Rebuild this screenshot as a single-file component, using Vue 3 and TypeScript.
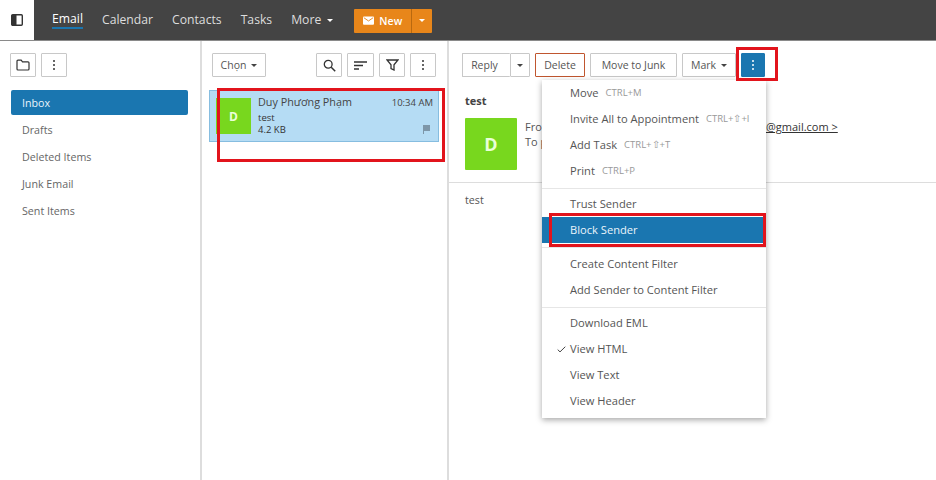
<script setup lang="ts">
const navItems = ['Calendar', 'Contacts', 'Tasks']
const folders = ['Drafts', 'Deleted Items', 'Junk Email', 'Sent Items']
</script>

<template>
  <div class="app">
    <header class="topbar">
      <div class="brand">
        <svg width="12" height="12" viewBox="0 0 12 12"><rect x=".7" y=".7" width="10.6" height="10.6" rx="1" fill="none" stroke="#333" stroke-width="1.4"/><rect x="1" y="1" width="4.5" height="10" fill="#333"/></svg>
      </div>
      <nav class="nav">
        <span class="nav-item active">Email</span>
        <span v-for="n in navItems" :key="n" class="nav-item">{{ n }}</span>
        <span class="nav-item">More <i class="caret light"></i></span>
      </nav>
      <div class="new-btn">
        <span class="new-main">
          <svg width="11" height="9" viewBox="0 0 12 9"><rect width="12" height="9" rx="1" fill="#fff"/><path d="M1 1.5 6 5l5-3.5" fill="none" stroke="#e8861a" stroke-width="1"/></svg>
          New
        </span>
        <span class="new-drop"><i class="caret light"></i></span>
      </div>
    </header>

    <main class="body">
      <aside class="sidebar">
        <div class="tools">
          <button class="btn icon">
            <svg width="14" height="12" viewBox="0 0 14 12"><path d="M1 2.2c0-.6.4-1 1-1h3.2l1.3 1.6H12c.6 0 1 .4 1 1V10c0 .6-.4 1-1 1H2c-.6 0-1-.4-1-1z" fill="none" stroke="#333" stroke-width="1.2"/></svg>
          </button>
          <button class="btn icon"><span class="dots"><i></i><i></i><i></i></span></button>
        </div>
        <div class="folder selected">Inbox</div>
        <div v-for="f in folders" :key="f" class="folder">{{ f }}</div>
      </aside>

      <section class="list">
        <div class="list-tools">
          <button class="btn select">Chọn <i class="caret"></i></button>
          <div class="list-actions">
            <button class="btn icon">
              <svg width="13" height="13" viewBox="0 0 13 13"><circle cx="5.2" cy="5.2" r="3.9" fill="none" stroke="#333" stroke-width="1.3"/><path d="m8.2 8.2 4 4" stroke="#333" stroke-width="1.5"/></svg>
            </button>
            <button class="btn icon wide">
              <svg width="13" height="9" viewBox="0 0 13 9"><path d="M0 1h13M0 4.5h9M0 8h5" stroke="#333" stroke-width="1.3"/></svg>
            </button>
            <button class="btn icon">
              <svg width="13" height="12" viewBox="0 0 13 12"><path d="M1 1h11L8 5.8V11L5 9.5V5.8z" fill="none" stroke="#333" stroke-width="1.3"/></svg>
            </button>
            <button class="btn icon"><span class="dots"><i></i><i></i><i></i></span></button>
          </div>
        </div>
        <div class="message">
          <div class="avatar small">D</div>
          <div class="msg-text">
            <div class="msg-row"><span class="sender">Duy Phương Phạm</span><span class="time">10:34 AM</span></div>
            <div class="subject">test</div>
            <div class="msg-row"><span class="size">4.2 KB</span>
              <svg width="9" height="9" viewBox="0 0 9 9" class="flag"><path d="M1 0h7v6H2v3H1z" fill="#7d96a8"/></svg>
            </div>
          </div>
        </div>
      </section>

      <section class="reader">
        <div class="read-tools">
          <div class="split">
            <button class="btn reply">Reply</button>
            <button class="btn reply-drop"><i class="caret"></i></button>
          </div>
          <button class="btn delete">Delete</button>
          <button class="btn junk">Move to Junk</button>
          <button class="btn mark">Mark <i class="caret"></i></button>
          <button class="btn icon more"><span class="dots white"><i></i><i></i><i></i></span></button>
        </div>
        <div class="read-head">
          <div class="read-subject">test</div>
          <div class="read-meta">
            <div class="avatar large">D</div>
            <div class="addr">
              <div class="addr-from"><span>From</span><span class="email">@gmail.com &gt;</span></div>
              <div>To p</div>
            </div>
          </div>
        </div>
        <div class="read-body">test</div>
      </section>
    </main>

    <div class="menu">
      <div class="m-item"><span>Move</span><small>CTRL+M</small></div>
      <div class="m-item"><span>Invite All to Appointment</span><small>CTRL+⇧+I</small></div>
      <div class="m-item"><span>Add Task</span><small>CTRL+⇧+T</small></div>
      <div class="m-item"><span>Print</span><small>CTRL+P</small></div>
      <div class="m-sep"></div>
      <div class="m-item"><span>Trust Sender</span></div>
      <div class="m-item m-active"><span>Block Sender</span></div>
      <div class="m-sep tall"></div>
      <div class="m-item"><span>Create Content Filter</span></div>
      <div class="m-item"><span>Add Sender to Content Filter</span></div>
      <div class="m-sep"></div>
      <div class="m-item"><span>Download EML</span></div>
      <div class="m-item">
        <svg class="check" width="9" height="7" viewBox="0 0 9 7"><path d="m.7 3.6 2.3 2.3L8.3.7" fill="none" stroke="#444" stroke-width="1"/></svg>
        <span>View HTML</span>
      </div>
      <div class="m-item"><span>View Text</span></div>
      <div class="m-item"><span>View Header</span></div>
    </div>

    <div class="mark-box box-msg"></div>
    <div class="mark-box box-more"></div>
    <div class="mark-box box-block"></div>
  </div>
</template>

<style>
html, body { margin: 0; background: #fff; }
</style>

<style scoped>
.app {
  position: relative;
  width: 936px;
  height: 480px;
  overflow: hidden;
  background: #fff;
  font-family: "Open Sans", "Noto Sans", sans-serif;
  font-size: 10.7px;
  color: #555;
}
i { font-style: normal; }
.topbar {
  display: flex;
  align-items: center;
  height: 41px;
  background: #444;
  border-bottom: 1px solid #8a8a8a;
  box-sizing: border-box;
}
.brand {
  width: 34px;
  height: 40px;
  background: #fff;
  display: flex;
  align-items: center;
  justify-content: center;
}
.nav { display: flex; gap: 19px; margin-left: 18px; }
.nav-item {
  color: #ddd;
  font-size: 12.2px;
  line-height: 18px;
  display: flex;
  align-items: center;
  gap: 6px;
}
.nav-item.active { color: #fff; border-bottom: 2px solid #1a76b0; line-height: 16px; }
.caret {
  display: inline-block;
  width: 0;
  height: 0;
  border: 3px solid transparent;
  border-top: 3px solid #444;
  border-bottom: 0;
}
.caret.light { border-top-color: #fff; }
.new-btn {
  display: flex;
  height: 24px;
  margin-left: 21px;
  margin-top: 1px;
  background: #e8861a;
  border-radius: 1px;
  color: #fff;
  font-weight: 600;
  font-size: 10.5px;
}
.new-main {
  width: 58px;
  box-sizing: border-box;
  border-right: 1px solid #b9690f;
  display: flex;
  align-items: center;
  justify-content: center;
  gap: 5px;
}
.new-drop { width: 20px; display: flex; align-items: center; justify-content: center; }

.body { display: flex; height: 439px; }
.sidebar {
  width: 200px;
  box-sizing: border-box;
  padding: 12px 12px 0 11px;
}
.tools { display: flex; gap: 5px; margin: 0 0 13px -1px; }
.btn {
  height: 24px;
  box-sizing: border-box;
  padding: 0 8px;
  background: #fff;
  border: 1px solid #c8c8c8;
  border-radius: 1px;
  font-family: inherit;
  font-size: 10.5px;
  color: #555;
  display: inline-flex;
  align-items: center;
  justify-content: center;
  gap: 5px;
}
.btn.icon { width: 26px; padding: 0; }
.btn.wide { width: 27px; }
.dots { display: flex; flex-direction: column; gap: 1.5px; }
.dots i { width: 2.4px; height: 2.4px; border-radius: 50%; background: #333; display: block; }
.dots.white i { background: #fff; }
.folder {
  height: 27px;
  line-height: 28px;
  padding-left: 11px;
  color: #666;
}
.folder.selected {
  height: 25px;
  line-height: 27px;
  margin-bottom: 1px;
  background: #1a76b0;
  color: #eaf4fb;
  border-radius: 2px;
  width: 177px;
  box-sizing: border-box;
}
.list {
  width: 249px;
  box-sizing: border-box;
  border-left: 2px solid #ddd;
  border-right: 2px solid #ddd;
  padding: 12px 0 0 7px;
}
.list-tools {
  display: flex;
  justify-content: space-between;
  padding: 0 11px 0 3px;
  margin-bottom: 13px;
}
.btn.select { width: 54px; padding: 0; }
.list-actions { display: flex; gap: 5px; }
.message {
  display: flex;
  width: 230px;
  height: 52px;
  box-sizing: border-box;
  background: #b5dcf4;
  border: 1px solid #86bde0;
  padding: 7px 5px 0 6px;
}
.avatar {
  background: #78d71e;
  color: #eaffd8;
  font-weight: 700;
  display: flex;
  align-items: center;
  justify-content: center;
  flex: none;
}
.avatar.small { width: 35px; height: 36px; font-size: 12px; }
.avatar.large { width: 52px; height: 52px; font-size: 18px; border-radius: 1px; }
.msg-text { flex: 1; margin-left: 7px; margin-top: -4px; color: #333; font-size: 9.5px; }
.msg-row { display: flex; justify-content: space-between; align-items: center; }
.sender { font-size: 10.8px; line-height: 16px; color: #444; }
.time { font-size: 9.5px; color: #444; }
.subject { line-height: 13px; margin-top: 1px; }
.size { line-height: 12px; }
.flag { margin-right: 2px; margin-top: -2px; }

.reader { flex: 1; padding-top: 12px; }
.read-tools { display: flex; padding-left: 13px; gap: 5px; }
.split { display: flex; }
.reply { width: 48px; border-right: 0; padding: 0 4px 0 0; }
.reply-drop { width: 20px; padding: 0; }
.delete { width: 50px; padding: 0; border-color: #c0562f; }
.junk { width: 87px; padding: 0; }
.mark { width: 54px; padding: 0; }
.btn.more { width: 24px; background: #1a76b0; border-color: #1a76b0; }
.read-head {
  height: 106px;
  box-sizing: border-box;
  padding: 16px 0 0 16px;
  border-bottom: 1px solid #ddd;
}
.read-subject { font-weight: 700; color: #444; font-size: 11px; line-height: 16px; margin-bottom: 9px; }
.read-meta { display: flex; gap: 8px; }
.addr { flex: 1; padding-top: 1px; line-height: 15px; color: #555; font-size: 11px; }
.addr-from { display: flex; }
.email { margin-left: 214px; color: #333; text-decoration: underline; }
.read-body { padding: 10px 0 0 16px; line-height: 14px; }

.menu {
  position: absolute;
  left: 542px;
  top: 80px;
  width: 224px;
  height: 338px;
  box-sizing: border-box;
  background: #fff;
  box-shadow: 0 2px 6px rgba(0, 0, 0, .35);
}
.m-item {
  position: relative;
  height: 26px;
  box-sizing: border-box;
  padding: 0 0 2px 28px;
  display: flex;
  align-items: center;
  gap: 7px;
  color: #555;
  font-size: 11.15px;
}
.m-item small { font-size: 9.5px; color: #999; }
.m-item.m-active { background: #1a76b0; color: #eaf4fb; }
.m-sep { height: 1px; background: #e6e6e6; margin: 4px 0 2px; }
.m-sep.tall { margin-bottom: 3px; }
.check { position: absolute; left: 15px; top: 10px; }
.mark-box { position: absolute; border: 3px solid #e2141c; box-sizing: border-box; }
.box-msg { left: 217px; top: 88px; width: 228px; height: 74px; }
.box-more { left: 736px; top: 47px; width: 42px; height: 34px; }
.box-block { left: 549px; top: 213px; width: 217px; height: 34px; }
</style>
